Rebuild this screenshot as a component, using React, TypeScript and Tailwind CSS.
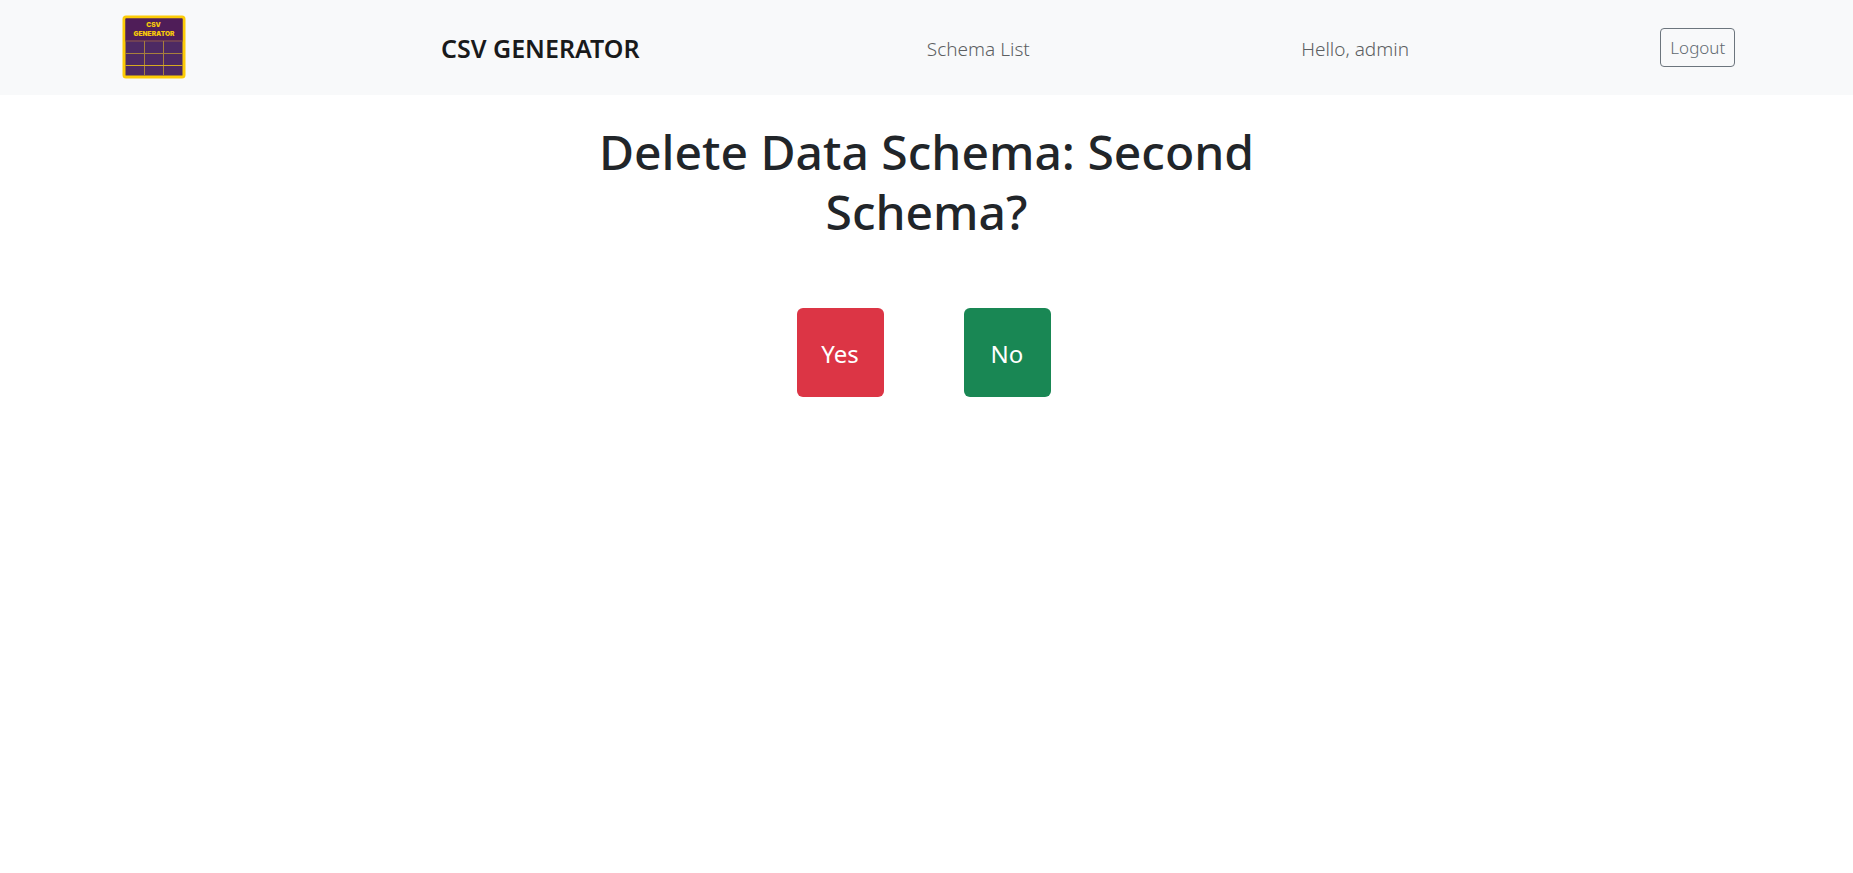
function Logo() {
  return (
    <svg viewBox="0 0 64 64" className="size-16 font-['Inter',sans-serif]" role="img" aria-label="CSV Generator logo">
      <rect x="2" y="2" width="60" height="60" rx="2" fill="#4d2a63" stroke="#fccb06" strokeWidth="3" />
      <rect x="3.5" y="3.5" width="57" height="22" fill="#4f1d58" />
      <path d="M3.5 26H60.5" stroke="#7d4a50" strokeWidth="1.4" />
      <path d="M3.5 38.5H60.5M22.5 26V60M41.5 26V60" stroke="#a8803c" strokeWidth="1" />
      <path d="M3.5 50.5H60.5" stroke="#d6aa20" strokeWidth="1" />
      <text x="31.5" y="11.8" textAnchor="middle" fontSize="6.6" fontWeight="900" fill="#f5c60b">
        CSV
      </text>
      <text x="32" y="20.8" textAnchor="middle" fontSize="6.6" fontWeight="900" fill="#f5c60b">
        GENERATOR
      </text>
    </svg>
  );
}

export default function App() {
  return (
    <div className="min-h-screen bg-white font-['Noto_Sans',sans-serif] text-[#212529]">
      <nav className="flex items-center justify-around bg-[#f8f9fa] pt-[15px] pb-4 text-[19px] font-light text-[#5c5f62]">
        <a href="#" className="pr-1 pl-1">
          <Logo />
        </a>
        <a href="#" className="px-4 pt-1 text-[25px] font-semibold text-[#191a1b]">
          CSV GENERATOR
        </a>
        <a href="#" className="pt-1 pr-5 pl-9">
          Schema List
        </a>
        <span className="px-4 pt-1">Hello, admin</span>
        <button
          type="button"
          className="rounded-sm border border-[#6c757d] px-[9px] py-1 text-[17px] leading-[29px] text-[#5f6870]"
        >
          Logout
        </button>
      </nav>
      <main className="flex flex-col items-center pt-[27px]">
        <h1 className="max-w-[680px] text-center text-5xl leading-[60px] font-medium">
          Delete Data Schema: Second Schema?
        </h1>
        <div className="mt-[66px] mr-1.5 flex gap-20 text-2xl text-white">
          <button type="button" className="min-w-[87px] rounded-md bg-[#dc3545] px-5 pt-[30px] pb-[27px]">
            Yes
          </button>
          <button type="button" className="min-w-[87px] rounded-md bg-[#198754] px-5 pt-[30px] pb-[27px]">
            No
          </button>
        </div>
      </main>
    </div>
  );
}
